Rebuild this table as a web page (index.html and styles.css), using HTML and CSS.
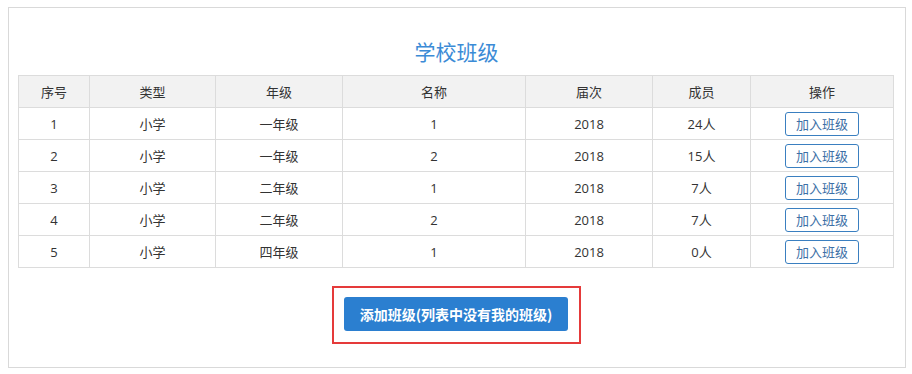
FILE: index.html
```html
<!DOCTYPE html>
<html lang="zh-CN">
<head>
<meta charset="utf-8">
<title>学校班级</title>
<link rel="stylesheet" href="styles.css">
</head>
<body>
<div class="panel">
  <h2 class="title">学校班级</h2>
  <table class="classes">
    <colgroup>
      <col class="c-no"><col class="c-type"><col class="c-grade"><col class="c-name"><col class="c-year"><col class="c-mem"><col class="c-op">
    </colgroup>
    <thead>
      <tr><th>序号</th><th>类型</th><th>年级</th><th>名称</th><th>届次</th><th>成员</th><th>操作</th></tr>
    </thead>
    <tbody>
      <tr><td>1</td><td>小学</td><td>一年级</td><td>1</td><td>2018</td><td>24人</td><td><button class="join">加入班级</button></td></tr>
      <tr><td>2</td><td>小学</td><td>一年级</td><td>2</td><td>2018</td><td>15人</td><td><button class="join">加入班级</button></td></tr>
      <tr><td>3</td><td>小学</td><td>二年级</td><td>1</td><td>2018</td><td>7人</td><td><button class="join">加入班级</button></td></tr>
      <tr><td>4</td><td>小学</td><td>二年级</td><td>2</td><td>2018</td><td>7人</td><td><button class="join">加入班级</button></td></tr>
      <tr><td>5</td><td>小学</td><td>四年级</td><td>1</td><td>2018</td><td>0人</td><td><button class="join">加入班级</button></td></tr>
    </tbody>
  </table>
  <div class="actions">
    <div class="highlight">
      <button class="add">添加班级(列表中没有我的班级)</button>
    </div>
  </div>
</div>
</body>
</html>
```

FILE: styles.css
```css
html, body {
  margin: 0;
  padding: 0;
  background: #fff;
}

body {
  font-family: "Open Sans", "Noto Sans CJK SC", sans-serif;
  color: #333;
  font-size: 13px;
}

.panel {
  box-sizing: border-box;
  margin: 7px 0 0 8px;
  width: 898px;
  height: 361px;
  border: 1px solid #d9d9d9;
  padding: 0 10px 0 9px;
}

.title {
  margin: 0;
  height: 67px;
  padding-top: 29px;
  box-sizing: border-box;
  text-align: center;
  font-family: "Noto Sans CJK SC", sans-serif;
  font-weight: normal;
  font-size: 21px;
  line-height: 28px;
  color: #3b8bd6;
}

.classes {
  width: 875px;
  border-collapse: collapse;
  table-layout: fixed;
}

.c-no { width: 71px; }
.c-type { width: 126px; }
.c-grade { width: 127px; }
.c-name { width: 183px; }
.c-year { width: 127px; }
.c-mem { width: 98px; }
.c-op { width: 143px; }

.classes th,
.classes td {
  border: 1px solid #dcdcdc;
  height: 31px;
  padding: 0;
  text-align: center;
  vertical-align: middle;
  font-weight: normal;
  font-size: 13px;
}

.classes th {
  background: #f2f2f2;
  font-family: "Noto Sans CJK SC", sans-serif;
}

.join {
  box-sizing: border-box;
  width: 74px;
  height: 24px;
  padding: 0;
  border: 1px solid #3a7fc0;
  border-radius: 3px;
  background: #fff;
  color: #3c6fa6;
  font-family: "Noto Sans CJK SC", sans-serif;
  font-size: 13px;
  line-height: 20px;
  cursor: pointer;
}

.actions {
  display: flex;
  justify-content: center;
  padding-top: 18px;
}

.highlight {
  box-sizing: border-box;
  width: 249px;
  height: 58px;
  border: 2px solid #e53a3a;
  padding: 9px 0 0 10px;
}

.add {
  box-sizing: border-box;
  width: 224px;
  height: 34px;
  border: none;
  border-radius: 3px;
  background: #2b7fd0;
  color: #fff;
  font-family: "Noto Sans CJK SC", sans-serif;
  font-size: 14px;
  font-weight: bold;
  padding: 0;
  cursor: pointer;
}
```
